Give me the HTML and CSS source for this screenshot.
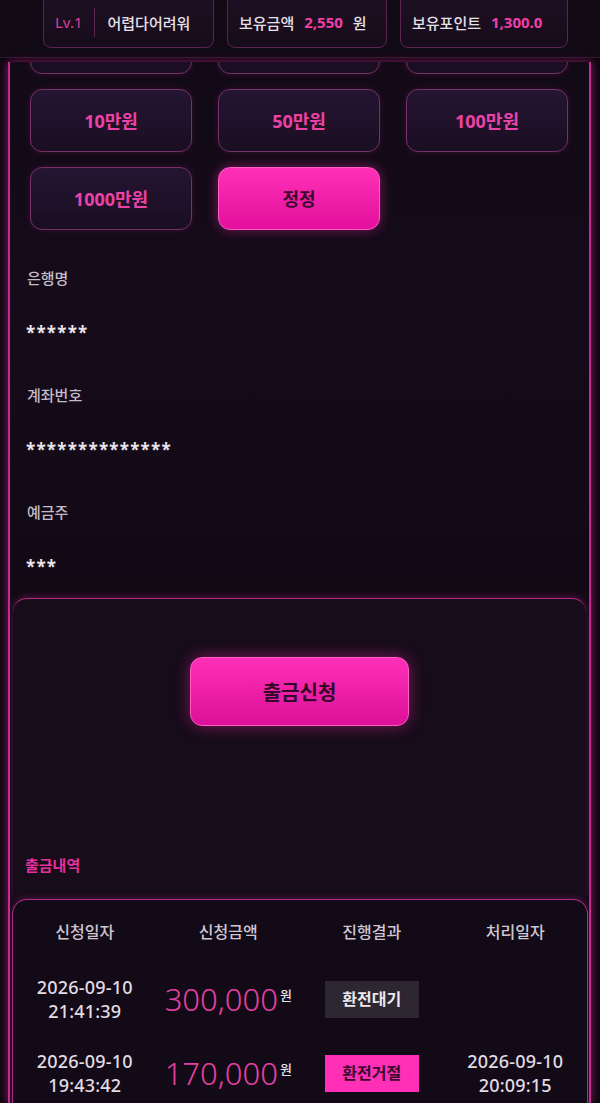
FILE: index.html
```html
<!DOCTYPE html>
<html lang="ko">
<head>
    <meta charset="UTF-8">
    <meta name="viewport" content="width=device-width, initial-scale=1.0">
    <title>출금신청</title>
    <link rel="stylesheet" href="styles.css">
</head>
<body>
    <header class="top-bar">
        <div class="info-box box-user">
            <span class="lv">Lv.1</span>
            <span class="divider"></span>
            <span class="nick">어렵다어려워</span>
        </div>
        <div class="info-box box-money">
            <span>보유금액</span>
            <span class="pink">2,550</span>
            <span>원</span>
        </div>
        <div class="info-box box-point">
            <span>보유포인트</span>
            <span class="pink">1,300.0</span>
        </div>
    </header>

    <main class="panel">
        <section class="form-card">
            <div class="amount-grid">
                <!-- first row is scrolled up under the header -->
                <button class="amount-btn"></button>
                <button class="amount-btn"></button>
                <button class="amount-btn"></button>
                <button class="amount-btn">10만원</button>
                <button class="amount-btn">50만원</button>
                <button class="amount-btn">100만원</button>
                <button class="amount-btn">1000만원</button>
                <button class="amount-btn reset-btn">정정</button>
            </div>

            <div class="fields">
                <div class="field">
                    <label>은행명</label>
                    <div class="field-value">******</div>
                </div>
                <div class="field">
                    <label>계좌번호</label>
                    <div class="field-value">**************</div>
                </div>
                <div class="field">
                    <label>예금주</label>
                    <div class="field-value">***</div>
                </div>
            </div>
        </section>

        <section class="submit-card">
            <button class="submit-btn">출금신청</button>
            <h3 class="history-title">출금내역</h3>
        </section>

        <div class="history">
            <div class="history-row history-head">
                <span>신청일자</span>
                <span>신청금액</span>
                <span>진행결과</span>
                <span>처리일자</span>
            </div>
            <div class="history-row">
                <span class="date">2026-09-10<br>21:41:39</span>
                <span class="amount">300,000<small>원</small></span>
                <span><em class="badge wait">환전대기</em></span>
                <span class="date"></span>
            </div>
            <div class="history-row">
                <span class="date">2026-09-10<br>19:43:42</span>
                <span class="amount">170,000<small>원</small></span>
                <span><em class="badge reject">환전거절</em></span>
                <span class="date">2026-09-10<br>20:09:15</span>
            </div>
        </div>
    </main>
</body>
</html>
```

FILE: styles.css
```css
* {
    box-sizing: border-box;
}
body {
    margin: 0;
    height: 1103px;
    overflow: hidden;
    background: #0d0710;
    color: #d8d0dc;
    font-family: "Noto Sans", "Noto Sans CJK KR", sans-serif;
}
.top-bar {
    height: 58px;
    display: flex;
    align-items: flex-end;
    gap: 13px;
    padding: 0 0 9px 43px;
    background: #120a15;
    border-bottom: 1px solid #2b1d2d;
    overflow: hidden;
}
.info-box {
    height: 70px;
    display: flex;
    align-items: center;
    gap: 10px;
    padding: 18px 11px 0;
    border: 1px solid #5a2550;
    border-radius: 8px;
    background: linear-gradient(to bottom, #1f1125, #170c1b);
    font-size: 15px;
    font-weight: 500;
    color: #e6e0e8;
}
.box-user { width: 171px; }
.box-money { width: 160px; }
.box-point { width: 168px; }
.lv {
    color: #d8409a;
    font-weight: 400;
}
.divider {
    width: 1px;
    height: 29px;
    background: #5a2550;
    margin: 0 2px;
}
.pink {
    color: #f03fa8;
    font-weight: 700;
}
.panel {
    margin: 4px 9px 0 8px;
    height: 1041px;
    overflow: hidden;
    border-left: 2px solid #c42a92;
    border-right: 2px solid #c42a92;
    background: #130a17;
    box-shadow: -2px 0 8px rgba(210, 40, 150, 0.35), 2px 0 8px rgba(210, 40, 150, 0.35);
}
.form-card {
    padding: 0 20px 20px;
    background: linear-gradient(to bottom, #120a16, #150b1a 50%, #120915);
}
.amount-grid {
    margin-top: -51px;
    display: grid;
    grid-template-columns: repeat(3, 162px);
    grid-auto-rows: 63px;
    column-gap: 26px;
    row-gap: 15px;
}
.amount-btn {
    border: 1px solid #77306a;
    border-radius: 12px;
    background: linear-gradient(to bottom, #241532, #1a0e22);
    color: #ea43a6;
    font-family: "Noto Sans", "Noto Sans CJK KR", sans-serif;
    font-size: 18px;
    font-weight: 700;
    padding-bottom: 3px;
    box-shadow: 0 0 6px rgba(150, 30, 110, 0.25);
}
.reset-btn {
    border-color: #ff5cc4;
    background: linear-gradient(to bottom, #ff30b8, #e2109c);
    color: #3a0a2c;
    box-shadow: 0 0 12px rgba(255, 40, 170, 0.45);
}
.fields {
    margin-top: 37px;
}
.field label {
    display: block;
    margin-left: -3px;
    height: 22px;
    line-height: 22px;
    font-size: 15px;
    font-weight: 500;
    color: #c4bcc8;
}
.field-value {
    margin: 33px 0 40px -4px;
    height: 22px;
    line-height: 22px;
    font-size: 17px;
    font-weight: 700;
    letter-spacing: 1.2px;
    color: #e8e4ea;
}
.field:last-child .field-value {
    margin-bottom: 0;
}
.submit-card {
    margin: 0 3px;
    padding-top: 58px;
    border-top: 1px solid #b02a86;
    border-radius: 14px 14px 0 0;
    background: #160c1a;
    box-shadow: 0 -2px 6px rgba(200, 40, 140, 0.3);
    display: flex;
    flex-direction: column;
    align-items: center;
}
.submit-btn {
    width: 219px;
    height: 69px;
    border: 1px solid #ff5cc4;
    border-radius: 12px;
    background: linear-gradient(to bottom, #ff30b8, #dc0f98);
    color: #340826;
    font-family: "Noto Sans", "Noto Sans CJK KR", sans-serif;
    font-size: 20px;
    font-weight: 700;
    box-shadow: 0 0 16px rgba(255, 40, 170, 0.45);
}
.history-title {
    align-self: flex-start;
    margin: 129px 0 24px 12px;
    line-height: 20px;
    font-size: 15px;
    font-weight: 700;
    color: #e6309e;
}
.history {
    margin: 0 1px 0 2px;
    border: 1px solid #b02a86;
    border-bottom: none;
    border-radius: 15px 15px 0 0;
    background: #120a16;
    box-shadow: 0 -1px 6px rgba(200, 40, 140, 0.3);
}
.history-row {
    display: grid;
    grid-template-columns: repeat(4, 1fr);
    align-items: center;
    height: 74px;
    text-align: center;
}
.history-head {
    height: 62px;
    font-size: 16px;
    font-weight: 500;
    color: #cfc6d2;
}
.date {
    font-size: 18px;
    font-weight: 500;
    line-height: 24px;
    letter-spacing: 0.2px;
    color: #e2dce4;
}
.amount {
    font-size: 31px;
    font-weight: 300;
    color: #e440a3;
}
.amount small {
    font-size: 13px;
    font-weight: 500;
    color: #e8e2ea;
    vertical-align: 11px;
    margin-left: 2px;
}
.badge {
    display: inline-block;
    width: 94px;
    height: 37px;
    line-height: 37px;
    font-style: normal;
    font-size: 16px;
    font-weight: 700;
}
.wait {
    background: #2c2730;
    color: #ece8ee;
}
.reject {
    background: #ff2fb6;
    color: #3a0a2c;
}
```
